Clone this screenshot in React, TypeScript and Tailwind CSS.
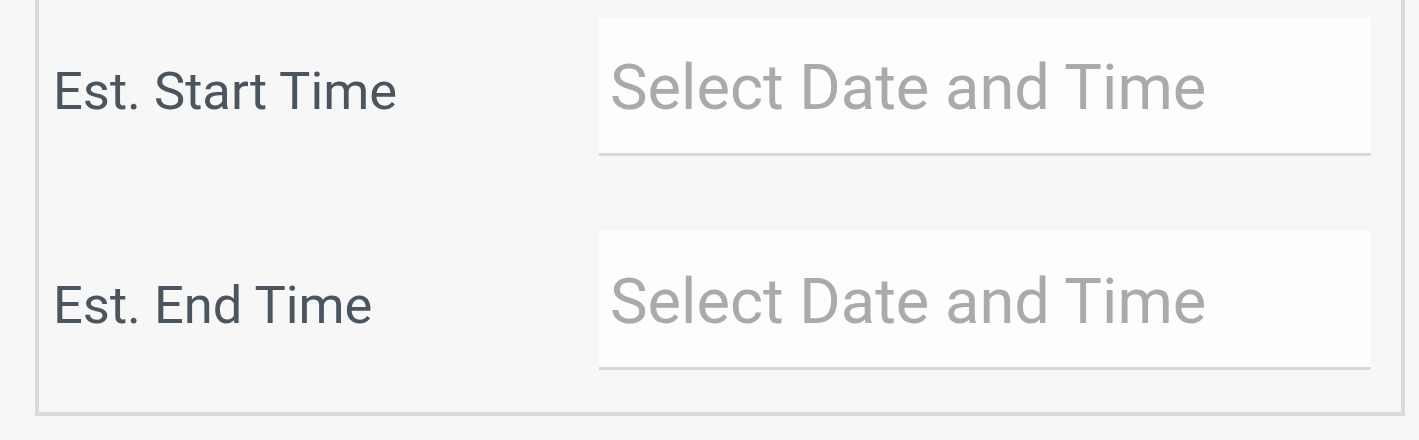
import React from 'react';

const fields = [
  { id: 'start', label: 'Est. Start Time' },
  { id: 'end', label: 'Est. End Time' },
];

export default function App() {
  return (
    <div className="min-h-[440px] w-full bg-[#f7f7f7] font-['Roboto',sans-serif]">
      <div className="ml-[35px] flex w-[1370px] flex-col gap-[75px] border-x-4 border-b-4 border-[#dadada] pb-[42px] pl-[14px] pr-[30px] pt-[17px]">
        {fields.map((f) => (
          <div key={f.id} className="flex items-center">
            <label htmlFor={f.id} className="w-[546px] shrink-0 pt-[10px] text-[52.5px] leading-none text-[#4a5560]">
              {f.label}
            </label>
            <input
              id={f.id}
              type="text"
              readOnly
              placeholder="Select Date and Time"
              className="h-[139px] min-w-0 flex-1 border-b-[3px] border-[#d9d9d9] bg-[#fdfdfd] pl-[11px] pt-[3px] text-[63.2px] text-[#333] outline-none placeholder:text-[#aaaaaa]"
            />
          </div>
        ))}
      </div>
    </div>
  );
}
